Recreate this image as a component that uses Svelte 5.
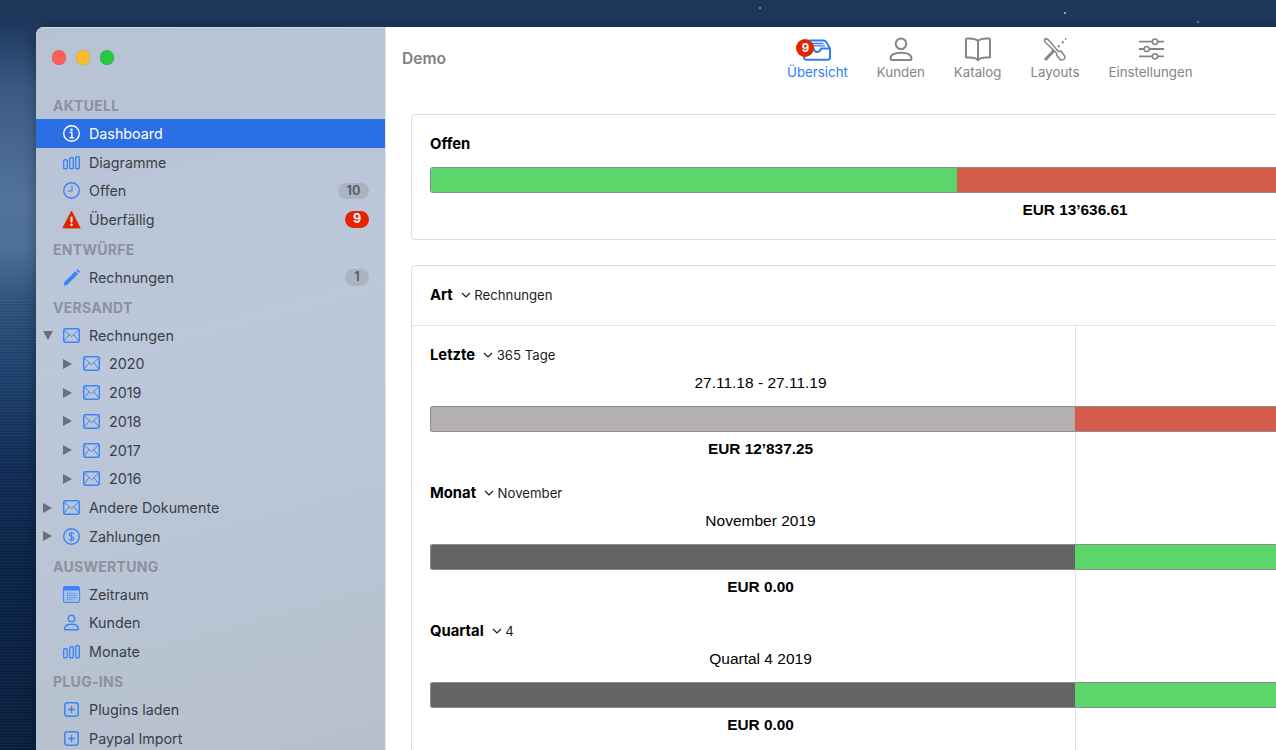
<script>
const sidebar = [
  { title: 'AKTUELL', items: [
    { label: 'Dashboard', icon: 'info', active: true },
    { label: 'Diagramme', icon: 'bars' },
    { label: 'Offen', icon: 'clock', badge: '10' },
    { label: 'Überfällig', icon: 'warn', badge: '9', alert: true }
  ]},
  { title: 'ENTWÜRFE', items: [
    { label: 'Rechnungen', icon: 'pen', badge: '1' }
  ]},
  { title: 'VERSANDT', items: [
    { label: 'Rechnungen', icon: 'mail', arrow: 'down' },
    { label: '2020', icon: 'mail', arrow: 'right', sub: true },
    { label: '2019', icon: 'mail', arrow: 'right', sub: true },
    { label: '2018', icon: 'mail', arrow: 'right', sub: true },
    { label: '2017', icon: 'mail', arrow: 'right', sub: true },
    { label: '2016', icon: 'mail', arrow: 'right', sub: true },
    { label: 'Andere Dokumente', icon: 'mail', arrow: 'right' },
    { label: 'Zahlungen', icon: 'dollar', arrow: 'right' }
  ]},
  { title: 'AUSWERTUNG', items: [
    { label: 'Zeitraum', icon: 'calendar' },
    { label: 'Kunden', icon: 'person' },
    { label: 'Monate', icon: 'bars' }
  ]},
  { title: 'PLUG-INS', items: [
    { label: 'Plugins laden', icon: 'plus' },
    { label: 'Paypal Import', icon: 'plus' }
  ]}
];

const tools = [
  { label: 'Übersicht', icon: 'tray', active: true },
  { label: 'Kunden', icon: 'user' },
  { label: 'Katalog', icon: 'book' },
  { label: 'Layouts', icon: 'brush' },
  { label: 'Einstellungen', icon: 'sliders' }
];

const periods = [
  { name: 'Letzte', value: '365 Tage', range: '27.11.18 - 27.11.19', amount: 'EUR 12’837.25', left: 'tone_light', right: 'tone_red' },
  { name: 'Monat', value: 'November', range: 'November 2019', amount: 'EUR 0.00', left: 'tone_dark', right: 'tone_green' },
  { name: 'Quartal', value: '4', range: 'Quartal 4 2019', amount: 'EUR 0.00', left: 'tone_dark', right: 'tone_green' }
];
</script>

{#snippet sideIcon(name)}
  <svg class="side_icon" viewBox="0 0 17 17" fill="none" stroke="currentColor" stroke-width="1.4">
    {#if name === 'info'}
      <circle cx="8.5" cy="8.5" r="7.8" stroke-width="1.4" />
      <circle cx="8.5" cy="4.8" r="1.2" fill="currentColor" stroke="none" />
      <path d="M6.6 7.4h2.3v5M6.4 12.7h4.4" stroke-width="1.4" />
    {:else if name === 'bars'}
      <rect x="0.7" y="5.7" width="3.6" height="9" rx="1" />
      <rect x="6.7" y="3.7" width="3.6" height="11" rx="1" />
      <rect x="12.7" y="2.7" width="3.6" height="12" rx="1" />
    {:else if name === 'clock'}
      <circle cx="8.5" cy="8.5" r="7.8" stroke-width="1.4" />
      <path d="M9 3.6v5.4H4.8" stroke-width="1.2" />
    {:else if name === 'warn'}
      <path d="M8.5 0 17.2 17H-0.2Z" fill="#e22400" stroke="#e22400" stroke-width="0.8" stroke-linejoin="round" />
      <rect x="7.5" y="5.6" width="2" height="6" rx="1" fill="#fff" stroke="none" />
      <circle cx="8.5" cy="13.7" r="1.2" fill="#fff" stroke="none" />
    {:else if name === 'pen'}
      <path d="M0.5 17 1.5 13 12.2 2.3 15 5.1 4.3 15.8Z" fill="currentColor" stroke="none" />
      <path d="M13.2 1.3 14.5 0 17.2 2.7 16 4.1Z" fill="currentColor" stroke="none" />
    {:else if name === 'mail'}
      <rect x="0.7" y="1.8" width="15.6" height="13.4" rx="1.6" stroke-width="1.5" />
      <path d="M1 2.8 8.5 9.6 16 2.8M1 14.4 6 7.8M16 14.4 11 7.8" stroke-width="1" />
    {:else if name === 'dollar'}
      <circle cx="8.5" cy="8.5" r="7.8" stroke-width="1.4" />
      <path d="M10.8 6.1C10.4 5 9.5 4.7 8.5 4.7 7.2 4.7 6.2 5.4 6.2 6.5 6.2 9 10.9 7.8 10.9 10.5 10.9 11.6 9.8 12.3 8.5 12.3 7.4 12.3 6.4 11.9 6 10.8M8.5 3.5v10" stroke-width="1.1" />
    {:else if name === 'calendar'}
      <rect x="0.4" y="0.6" width="16.2" height="15.8" rx="1.6" fill="#9dbcf0" fill-opacity="0.6" stroke-width="1" />
      <path d="M0.4 2.2C0.4 1.3 1.1 0.6 2 0.6h13c0.9 0 1.6 0.7 1.6 1.6V4.4H0.4Z" fill="currentColor" stroke="none" />
      <path d="M4 7.2h9.6M4 9.4h9.6M4 11.6h9.6M4 13.8h6" stroke-width="1.1" stroke-dasharray="1.1 1.1" />
    {:else if name === 'person'}
      <circle cx="8.5" cy="4.4" r="3.2" stroke-width="1.4" />
      <path d="M1.6 15.3C1.6 12 4.4 10.3 8.5 10.3S15.4 12 15.4 15.3C15.4 15.6 15.2 15.8 15 15.8H2C1.8 15.8 1.6 15.6 1.6 15.3Z" stroke-width="1.4" />
    {:else if name === 'plus'}
      <rect x="1.8" y="1.8" width="13.4" height="13.4" rx="2.4" stroke-width="1.5" />
      <path d="M8.5 5v7M5 8.5h7" stroke-width="1.4" />
    {/if}
  </svg>
{/snippet}

{#snippet toolIcon(name)}
  <svg class="tool_icon" viewBox="0 0 36 26" fill="none" stroke="currentColor" stroke-width="2">
    {#if name === 'tray'}
      <path d="M10 3.5h14.5c1.2 0 2.2 0.6 2.7 1.6L31 11.5v8.7c0 1.5-1 2.6-2.5 2.6H7.5C6 22.8 5 21.7 5 20.2V11.5" />
      <path d="M5 11.5h9.5c0.5 2.2 1.8 3.5 3.7 3.5S21.5 13.7 22 11.5h9" />
      <path d="M12 6.5h12.5M12 8.8h14" stroke-width="1.3" />
    {:else if name === 'user'}
      <circle cx="18" cy="6.8" r="5.3" />
      <path d="M7.5 21.7C7.5 17.7 11.6 15.7 18 15.7S28.5 17.7 28.5 21.7C28.5 22.7 28 23 27.2 23H8.8C8 23 7.5 22.7 7.5 21.7Z" />
    {:else if name === 'book'}
      <path d="M18 3.8C15.8 1.8 12.4 1.2 7 1.6 6.3 1.7 6 2 6 2.7V19.7C6 20.4 6.4 20.7 7 20.6 12 20.2 15.8 20.8 18 23 20.2 20.8 24 20.2 29 20.6 29.6 20.7 30 20.4 30 19.7V2.7C30 2 29.7 1.7 29 1.6 23.6 1.2 20.2 1.8 18 3.8ZM18 3.8V23" />
    {:else if name === 'brush'}
      <path d="M8 1.5 11 2.5 21.5 14.5 24 14 28 19.5C28 21.5 26.5 23.5 23.5 23 22 20.5 20 19.5 19.5 17.5 20 16 19.5 16 19 15.5L7.5 4.5Z" stroke-width="1.5" stroke-linejoin="round" />
      <path d="M8 23 17 13.5" stroke-width="3" />
      <path d="M21 10 22.5 8.5M25 6 26.5 4.5" stroke-width="2.2" />
      <path d="M28 2.5 29.2 1.3" stroke-width="1.6" />
    {:else if name === 'sliders'}
      <path d="M6 4.7h13M25 4.7h6M6 12h5M16.5 12H31M6 19.3h13M25 19.3h6" stroke-width="1.8" />
      <circle cx="22" cy="4.7" r="2.6" stroke-width="1.5" />
      <circle cx="13.7" cy="12" r="2.6" stroke-width="1.5" />
      <circle cx="22" cy="19.3" r="2.6" stroke-width="1.5" />
    {/if}
  </svg>
{/snippet}

{#snippet chevron()}
  <svg class="chevron" viewBox="0 0 10 6" fill="none" stroke="currentColor" stroke-width="1.2"><path d="M1 1 5 5 9 1" /></svg>
{/snippet}

<div class="stage">
  <div class="window">
    <aside class="sidebar">
      <div class="traffic">
        <span class="dot dot_red"></span>
        <span class="dot dot_yellow"></span>
        <span class="dot dot_green"></span>
      </div>
      {#each sidebar as section}
        <div class="section_title">{section.title}</div>
        {#each section.items as item}
          <div class="row" class:active={item.active} class:sub={item.sub}>
            <span class="arrow_slot">
              {#if item.arrow}<span class="arrow {item.arrow}"></span>{/if}
            </span>
            {@render sideIcon(item.icon)}
            <span class="row_label">{item.label}</span>
            {#if item.badge}
              <span class="badge" class:alert={item.alert} class:wide={item.badge.length > 1}>{item.badge}</span>
            {/if}
          </div>
        {/each}
      {/each}
    </aside>

    <main class="main">
      <header class="toolbar">
        <div class="doc_title">Demo</div>
        <nav class="tools">
          {#each tools as tool}
            <div class="tool" class:active={tool.active}>
              <div class="tool_graphic">
                {@render toolIcon(tool.icon)}
                {#if tool.active}<span class="tool_badge">9</span>{/if}
              </div>
              <span>{tool.label}</span>
            </div>
          {/each}
        </nav>
      </header>

      <div class="content">
        <section class="card open_card">
          <div class="card_title">Offen</div>
          <div class="bar">
            <div class="bar_part green_part" style="width: 527px"></div>
            <div class="bar_part red_part"></div>
          </div>
          <div class="amount">EUR 13’636.61</div>
        </section>

        <section class="card detail_card">
          <div class="detail_head">
            <span class="card_title">Art</span>
            <span class="select">{@render chevron()}Rechnungen</span>
          </div>
          <div class="columns">
            <div class="col left_col">
              {#each periods as period}
                <div class="period">
                  <div class="period_head">
                    <span class="period_name">{period.name}</span>
                    <span class="select">{@render chevron()}{period.value}</span>
                  </div>
                  <div class="range">{period.range}</div>
                  <div class="bar half {period.left}"></div>
                  <div class="amount small">{period.amount}</div>
                </div>
              {/each}
            </div>
            <div class="col right_col">
              {#each periods as period}
                <div class="period">
                  <div class="period_head"></div>
                  <div class="range">&nbsp;</div>
                  <div class="bar half_right {period.right}"></div>
                </div>
              {/each}
            </div>
          </div>
        </section>
      </div>
    </main>
  </div>
</div>

<style>
:global(body){
    margin: 0;
    overflow: hidden;
}
.stage{
    width: 1276px;
    height: 750px;
    overflow: hidden;
    box-sizing: border-box;
    padding: 27px 0 0 36px;
    font-family: Inter, "Noto Sans", sans-serif;
    background-color: #1c3659;
    background-image:
        radial-gradient(circle at 1065px 13px, #8fa3bd 0, #8fa3bd 0.7px, transparent 1.2px),
        radial-gradient(circle at 760px 8px, #7f95b3 0, #7f95b3 0.6px, transparent 1.1px),
        radial-gradient(circle at 1198px 22px, #7f95b3 0, #7f95b3 0.6px, transparent 1.1px),
        repeating-linear-gradient(180deg, rgba(255,255,255,0.035) 0 1px, rgba(0,0,0,0.05) 1px 3px),
        linear-gradient(180deg, #1d3659 0, #1f3a60 26px, #3b5b85 90px, #52739b 200px, #4c7097 250px, #2f5580 300px, #1d4270 380px, #122f5a 460px, #0b2549 560px, #0a2040 750px);
    background-size: auto, auto, auto, 100% 450px, auto;
    background-position: 0 0, 0 0, 0 0, 0 300px, 0 0;
    background-repeat: no-repeat;
}
.window{
    width: 1728px;
    height: 900px;
    display: flex;
    background: #fff;
    border-radius: 8px 0 0 0;
    overflow: hidden;
    box-shadow: 0 0 14px rgba(0, 0, 0, 0.35);
}

/* sidebar */
.sidebar{
    width: 349px;
    flex: none;
    border-right: 1px solid #e3e6ea;
    box-shadow: inset 0 1px 0 #d0d7e1;
    background: linear-gradient(165deg, #b7c2d3 0, #bcc8da 35%, #b9c4d4 60%, #b3bcc7 100%);
}
.traffic{
    display: flex;
    gap: 9.5px;
    padding: 23px 0 0 15.5px;
    height: 40px;
}
.dot{
    width: 14.5px;
    height: 14.5px;
    border-radius: 50%;
    box-shadow: inset 0 0 0 0.5px rgba(0, 0, 0, 0.12);
}
.dot_red{ background: #fe5f57; }
.dot_yellow{ background: #fdbc2e; }
.dot_green{ background: #28c83f; }
.section_title{
    height: 29px;
    line-height: 31px;
    padding-left: 17px;
    font-size: 14px;
    font-weight: 700;
    letter-spacing: 0.3px;
    color: #8b929e;
}
.row{
    height: 28.75px;
    display: flex;
    align-items: center;
    padding: 0 16px 0 7px;
    color: #3a3f47;
    font-size: 14.3px;
}
.row.sub{
    padding-left: 27px;
}
.row.active{
    background: #2a6fe3;
    color: #fff;
}
.arrow_slot{
    width: 20px;
    flex: none;
    display: flex;
    align-items: center;
}
.arrow{
    display: block;
    width: 0;
    height: 0;
}
.arrow.right{
    border-left: 9px solid #69707a;
    border-top: 5px solid transparent;
    border-bottom: 5px solid transparent;
}
.arrow.down{
    border-top: 9px solid #69707a;
    border-left: 5px solid transparent;
    border-right: 5px solid transparent;
}
.side_icon{
    width: 17px;
    height: 17px;
    flex: none;
    color: #3a83fa;
    margin-right: 9px;
    overflow: visible;
}
.row.active .side_icon{
    color: #fff;
}
.row_label{
    flex: 1;
}
.badge{
    width: 24px;
    height: 16.5px;
    line-height: 16.5px;
    border-radius: 9px;
    background: #aab4c1;
    color: #5a6069;
    font-size: 12.5px;
    font-weight: 700;
    text-align: center;
}
.badge.wide{
    width: 31px;
}
.badge.alert{
    background: #e22400;
    color: #fff;
}

/* toolbar */
.main{
    flex: 1;
    min-width: 0;
}
.toolbar{
    height: 87px;
    display: flex;
    box-sizing: border-box;
    padding: 10px 0 0 16px;
}
.doc_title{
    width: 385px;
    margin-top: 12px;
    font-size: 15.6px;
    font-weight: 600;
    color: #7f7f7f;
}
.tools{
    display: flex;
    gap: 29px;
    align-items: flex-start;
}
.tool{
    display: flex;
    flex-direction: column;
    align-items: center;
    font-size: 13.3px;
    line-height: 16px;
    color: #858585;
}
.tool.active{
    color: #2f7df6;
}
.tool_graphic{
    position: relative;
    height: 26px;
    margin-bottom: 1px;
}
.tool_icon{
    display: block;
    width: 36px;
    height: 26px;
}
.tool_badge{
    position: absolute;
    left: -3px;
    top: 2px;
    width: 18px;
    height: 18px;
    line-height: 18px;
    border-radius: 50%;
    background: #e22400;
    color: #fff;
    font-size: 11.5px;
    font-weight: 700;
    text-align: center;
}

/* content */
.content{
    padding: 0 25px;
    display: flex;
    flex-direction: column;
    gap: 25px;
}
.card{
    border: 1px solid #dedede;
    border-radius: 4px;
    color: #000;
}
.open_card{
    height: 124px;
    padding: 0 18px;
}
.card_title{
    font-size: 14.8px;
    font-weight: 700;
}
.open_card .card_title{
    height: 52px;
    line-height: 58px;
}
.bar{
    height: 26px;
    box-sizing: border-box;
    display: flex;
    border-radius: 3px 0 0 3px;
    border: 1px solid #8d8d8d;
    border-width: 1px 0;
    overflow: hidden;
}
.bar_part{
    height: 100%;
}
.green_part{
    background: #5cd66b;
    box-shadow: inset 1px 0 0 #8d8d8d;
}
.red_part{
    flex: 1;
    background: #d45c4b;
}
.amount{
    text-align: center;
    font-family: "Liberation Sans", Arial, sans-serif;
    font-size: 15.4px;
    font-weight: 700;
    line-height: 17px;
    padding-top: 8px;
}
.detail_head{
    height: 58px;
    padding: 0 0 1px 18px;
    border-bottom: 1px solid #e3e3e3;
    display: flex;
    align-items: center;
    gap: 8px;
}
.select{
    display: inline-flex;
    align-items: center;
    gap: 3.5px;
    font-size: 13.2px;
    color: #1c1c1c;
}
.chevron{
    width: 10px;
    height: 6px;
    flex: none;
}
.columns{
    display: flex;
}
.col{
    box-sizing: border-box;
    flex: none;
    padding-top: 19px;
}
.left_col{
    width: 664px;
    padding-left: 18px;
    border-right: 1px solid #e3e3e3;
}
.right_col{
    width: 663px;
    margin-left: -1px;
}
.period{
    height: 138px;
}
.period_head{
    height: 20px;
    display: flex;
    align-items: center;
    gap: 8px;
}
.period_name{
    font-size: 14.8px;
    font-weight: 700;
}
.range{
    height: 34px;
    line-height: 35px;
    margin-bottom: 7px;
    padding-left: 16px;
    text-align: center;
    font-family: "Liberation Sans", Arial, sans-serif;
    font-size: 15.5px;
}
.amount.small{
    padding: 8px 0 0 16px;
}
.half{
    box-shadow: inset 1px 0 0 #8d8d8d;
}
.half_right{
    border-radius: 0;
}
.tone_light{
    background: #b4b0b0;
}
.tone_dark{
    background: #646464;
    border-color: #8a8a8a;
}
.tone_red{
    background: #d45c4b;
}
.tone_green{
    background: #5cd66b;
}
</style>
